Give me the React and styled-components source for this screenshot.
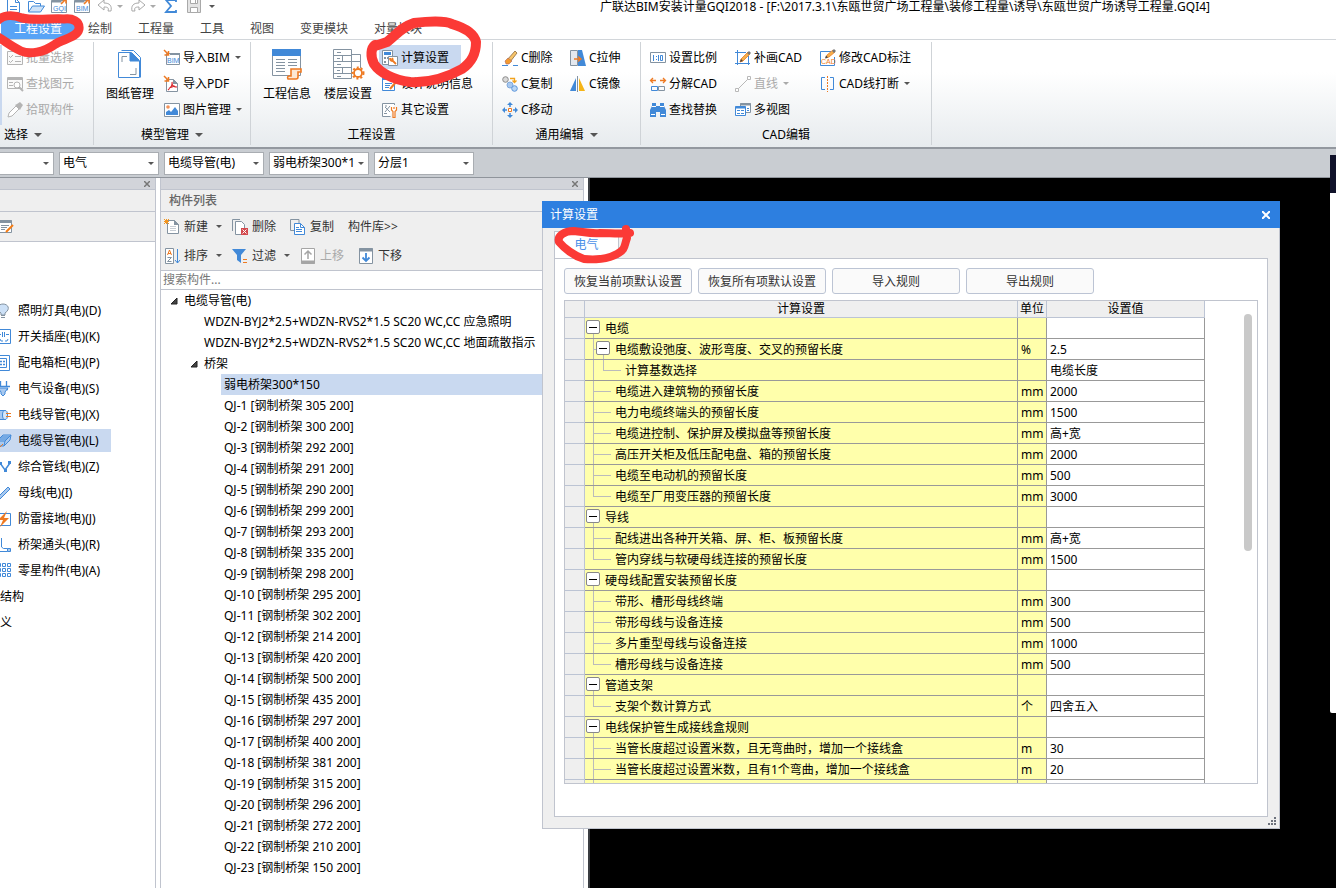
import React from "react";
import styled, { createGlobalStyle, css } from "styled-components";

const BLUE = "#4189d8";
const STEEL = "#8493a1";
const ORANGE = "#ee7a22";
const LINE = "#c0c4ce";

const GlobalStyle = createGlobalStyle`
  * {
    box-sizing: border-box;
  }
  body {
    margin: 0;
    background: #fff;
  }
  body, button, input, select {
    font-family: "Noto Sans", "Noto Sans CJK SC", sans-serif;
    font-size: 12px;
    line-height: 20px;
    color: #000;
  }
  button {
    border: none;
    padding: 0;
    background: none;
    white-space: nowrap;
    cursor: pointer;
  }
`;

/* ---------- icons ---------- */

const Icon = styled.svg`
  width: ${(p) => p.$size || 16}px;
  height: ${(p) => p.$size || 16}px;
  flex: none;
  display: block;
  fill: none;
  overflow: visible;
`;

const IconText = styled.text`
  font-size: 7px;
  font-family: "Liberation Sans", sans-serif;
`;

const PageShape = ({ x = 2 }) => (
  <path d={`M${x + 0.5} 1.5h7l4 4v9h-11z M${x + 7.5} 1.5v4h4`} stroke={STEEL} fill="#fff" />
);

const pencil = (
  <g>
    <path d="M5 12l1-3 7-7 2 2-7 7z" fill="#f5b04c" stroke={ORANGE} strokeWidth=".8" />
    <path d="M12 3l2-2 2 2-2 2z" fill="#777" />
    <path d="M5 12l1-3 2 2z" fill="#444" />
  </g>
);

const icons = {
  newFile: (
    <g stroke={BLUE}>
      <path d="M2.5.5h8l4 4v10h-12z" fill="#fff" />
      <path d="M10.5.5v4h4" />
      <path d="M5 8.5h7M5 11.5h7" />
    </g>
  ),
  open: (
    <g stroke={BLUE}>
      <path d="M.5 14V3.5h5l2 2h5v3" fill="#fff" />
      <path d="M.5 14l4-6h12l-4 6z" fill="#cfe3f8" />
    </g>
  ),
  gqi: (
    <g>
      <path d="M.5 2.5h15v12H.5z" stroke={STEEL} fill="#fff" />
      <path d="M.5 3.5h10" stroke={STEEL} strokeWidth="2" />
      <IconText x="2" y="13" fill={BLUE}>GQI</IconText>
      <path d="M10 6l4-4M11 1.5h4v4" stroke={ORANGE} strokeWidth="1.6" />
    </g>
  ),
  bimOut: (
    <g>
      <path d="M.5 2.5h15v12H.5z" stroke={STEEL} fill="#fff" />
      <path d="M.5 3.5h10" stroke={STEEL} strokeWidth="2" />
      <IconText x="2" y="13" fill={BLUE}>BIM</IconText>
      <path d="M10 6l4-4M11 1.5h4v4" stroke={ORANGE} strokeWidth="1.6" />
    </g>
  ),
  undo: <path d="M1 7l6-5v3c6 0 8 3 7 8h-3c1-3 0-4-4-4v3z" stroke="#a9a9a9" fill="#fff" />,
  redo: <path d="M15 7L9 2v3C3 5 1 8 2 13h3c-1-3 0-4 4-4v3z" stroke="#a9a9a9" fill="#fff" />,
  sum: <path d="M13 4V2H3l5 6-5 6h10v-2" stroke={BLUE} strokeWidth="1.8" />,
  save: (
    <g stroke="#a9a9a9">
      <path d="M1.5 1.5h13v13h-13z" fill="#e4e4e4" />
      <path d="M4.5 1.5h7v4h-7zM4.5 9.5h7v5h-7z" fill="#fff" />
      <path d="M9.5 2v3" />
    </g>
  ),
  batch: (
    <g stroke="#b4b4b4">
      <path d="M.5 1.5h15v13H.5z" fill="#fafafa" />
      <path d="M2 6l1.5 1.5L6 5M2 11l1.5 1.5L6 10M8 6.5h6M8 11.5h6" />
    </g>
  ),
  find: (
    <g stroke="#b4b4b4">
      <path d="M.5 1.5h15v11H.5z" fill="#fafafa" />
      <path d="M1 3h14" strokeWidth="2" />
      <path d="M2 6.5h4M2 9.5h4" />
      <circle cx="10" cy="9" r="3" fill="#fff" />
      <path d="M12 11l4 4" strokeWidth="2" />
    </g>
  ),
  dropper: (
    <g>
      <path d="M1 15l1-4 7-7 3 3-7 7z" stroke="#b4b4b4" fill="#fff" />
      <path d="M8 3l2-1 3-2 3 3-2 3-1 2z" fill="#b4b4b4" />
    </g>
  ),
  importBim: (
    <g>
      <path d="M2.5 3.5h13v11h-13z" stroke={STEEL} fill="#fff" />
      <path d="M6 4h10" stroke={STEEL} strokeWidth="2" />
      <IconText x="3" y="13" fill={BLUE}>BIM</IconText>
      <path d="M0 0l4 4M4.5 1v4h-4" stroke={ORANGE} strokeWidth="1.5" />
    </g>
  ),
  importPdf: (
    <g>
      <path d="M2.5 3.5h7l4 4v8h-11z" stroke={STEEL} fill="#fff" />
      <path d="M9 3l5 5H9z" fill={STEEL} />
      <path d="M8 6c1 4-2 6-4 8 M8 8c1 3 3 3 5 3 M5 12l6-2" stroke="#d8262c" strokeWidth="1.2" />
      <path d="M0 0l4 4M4.5 1v4h-4" stroke={ORANGE} strokeWidth="1.5" />
    </g>
  ),
  picture: (
    <g>
      <path d="M.5 1.5h15v13H.5z" stroke={STEEL} fill="#fff" />
      <circle cx="4" cy="5" r="1.8" fill="#f3935a" />
      <path d="M2 13v-3l3-2 2 2 4-5 3 4v4z" fill={BLUE} />
    </g>
  ),
  calc: (
    <g>
      <path d="M.5.5h10v14H.5z" stroke={STEEL} fill="#fff" />
      <path d="M2 2h7v3H2z" fill={BLUE} />
      <path d="M2 7h2v2H2zM5 7h2v2H5zM2 11h2v2H2z" fill={STEEL} />
      <path d="M6.5 6.5h9v9h-9z" stroke={STEEL} fill="#fff" />
      <path d="M8 8c0 3 2 3 3 3l3 3M10 8l1 2" stroke={ORANGE} strokeWidth="1.8" />
    </g>
  ),
  describe: (
    <g>
      <path d="M.5 1.5h12v13H.5z" stroke={BLUE} fill="#fff" />
      <path d="M.5 2.5h12" stroke={BLUE} strokeWidth="3" />
      <path d="M3 7.5h7M3 9.5h5M3 11.5h4" stroke={BLUE} />
      <path d="M8 13l6-7" stroke={ORANGE} strokeWidth="2" />
    </g>
  ),
  other: (
    <g>
      <path d="M12.5 3V1.500H.5v13h8" stroke={STEEL} fill="#fff" />
      <path d="M3 5l5 5M8 4l-5 6M3 4h2M2 11.5h3" stroke={STEEL} />
      <path d="M9.500 5v3l1.500 1.500V15.500h2V9.500L14.500 8V5M12 5v2" stroke={ORANGE} strokeWidth="1.2" fill="#fff" />
    </g>
  ),
  eraser: (
    <g>
      <path d="M0 15.5h6M11 15.5h5" stroke={BLUE} />
      <path d="M5 10l8-9 2 2-7 9z" fill="#f7c46a" stroke="#8a6a3c" strokeWidth=".8" />
      <path d="M3 11l3-3 4 3-3 3H4z" fill="#f39a2e" stroke="#a66" strokeWidth=".6" />
    </g>
  ),
  copyC: (
    <g>
      <circle cx="3.5" cy="3.5" r="2.8" stroke="#8c8c8c" fill="#d9d9d9" />
      <path d="M8 2.5h4.500V6M10.5 4.5l2 2 2-2" stroke="#f2a21c" strokeWidth="1.3" />
      <circle cx="8" cy="9" r="3" stroke="#7fa9dc" fill="#a9c9ef" />
      <circle cx="12.5" cy="12.5" r="2.8" stroke="#5d96da" fill="#b9d6f5" />
    </g>
  ),
  move: (
    <g>
      <path d="M8 0l3 3H5zM8 16l3-3H5zM0 8l3-3v6zM16 8l-3-3v6z" fill={BLUE} />
      <path d="M8 3v2M8 11v2M3 8h2M11 8h2" stroke={BLUE} strokeWidth="1.5" />
      <path d="M6.5 6.5h3v3h-3z" stroke={ORANGE} fill="#fff" />
    </g>
  ),
  stretch: (
    <g>
      <path d="M.5.5h7v15h-7z" stroke={STEEL} fill="#e4e8ee" />
      <path d="M8 0h4l4 16H8z" fill={BLUE} />
      <path d="M4 9h7M8 6.5l3 2.500-3 2.500" stroke={ORANGE} strokeWidth="1.4" />
    </g>
  ),
  mirror: (
    <g>
      <path d="M6 2v13H0z" fill={BLUE} />
      <path d="M9 2v13h6z" fill="#f5b417" />
      <path d="M7.5 0v16" stroke={STEEL} />
    </g>
  ),
  scale: (
    <g>
      <path d="M.5 2.5h15v10H.5z" stroke={STEEL} fill="#fff" />
      <path d="M3.500 5v6M6.500 6v1M6.500 9v1M8.500 5v6M10.500 5.5h2v5h-2z" stroke={BLUE} />
    </g>
  ),
  explode: (
    <g>
      <path d="M1 4.5h5M10 4.5h5M3 2L.5 4.5 3 7M13 2l2.5 2.5L13 7" stroke={ORANGE} strokeWidth="1.3" />
      <path d="M1.5 10.5h6v4h-6z" stroke={BLUE} />
      <path d="M8.5 10.5h6v4h-6z" stroke={STEEL} />
    </g>
  ),
  replace: (
    <g fill={BLUE}>
      <path d="M2 1h4v3h4V1h4v3l2 4v7h-6v-5H6v5H0V8l2-4z" />
      <path d="M2 4.5h4M10 4.5h4M1 12.5h4M11 12.5h4" stroke="#fff" />
    </g>
  ),
  drawCad: (
    <g>
      <path d="M2.5 0v15M0 2.5h11M0 13.5h15M13.5 6v9" stroke={BLUE} />
      {pencil}
    </g>
  ),
  lineTool: (
    <g stroke="#b8b8b8">
      <path d="M2 14L14 2" />
      <path d="M.5 12.5h3v3h-3zM12.5.5h3v3h-3z" fill="#fff" />
    </g>
  ),
  multi: (
    <g>
      <path d="M5.5 1.5h10v9h-10z" stroke={STEEL} fill="#fff" />
      <path d="M5 2.5h11" stroke={STEEL} strokeWidth="2" />
      <path d="M.5 4.5h10v9H.5z" stroke={BLUE} fill="#fff" />
      <path d="M.5 5.5h10" stroke={BLUE} strokeWidth="2" />
      <path d="M2 8.5h3M6 8.5h3M2 11.5h3M6 11.5h3M12 6.5h2M12 8.5h2" stroke={BLUE} />
    </g>
  ),
  editCad: (
    <g>
      <path d="M11 1.5H.5v14h14V7" stroke={BLUE} fill="#fff" />
      <path d="M6 8l1-3 6-5 2 2-6 5z" fill="#f5b04c" stroke={ORANGE} strokeWidth=".8" />
      <path d="M12 1l2-2 2 2-2 2z" fill="#777" />
      <path d="M5 8.500l1-3 2 2z" fill="#444" />
      <IconText x="1" y="14" fill={ORANGE}>CAD</IconText>
    </g>
  ),
  breakCad: (
    <g>
      <path d="M5 1.5H1.5v12H5M10 1.5h3.500v12H10" stroke={BLUE} />
      <path d="M7.5 0v16" stroke={ORANGE} strokeDasharray="2 1" />
    </g>
  ),
  bulb: (
    <g>
      <path d="M6 10C0 6 3 1 8 1s8 5 2 9v2H6z" stroke={STEEL} fill="#cde1f7" />
      <path d="M6 14.5h4M6 12.5h4" stroke={STEEL} />
    </g>
  ),
  socket: (
    <g stroke={BLUE}>
      <path d="M.5.5h15v14H.5z" fill="#fff" />
      <path d="M3 5.5h3M7.5 3v5M9.5 3v5M11 5.5h3M5 10l1 2h2M13 10l-1 2h-2" />
    </g>
  ),
  cabinet: (
    <g stroke={BLUE}>
      <path d="M.5.5h14v15H.5z" fill="#fff" />
      <path d="M3.5 3.5h8v9h-8z" />
      <path d="M5 6.5h2M8 6.5h2M5 9.5h2M8 9.5h2" strokeWidth="1.4" />
    </g>
  ),
  device: (
    <g>
      <path d="M5.5 0v5M11.5 0v5M1 5.5h14M3 8.5h10" stroke={BLUE} strokeWidth="1.3" />
      <path d="M3 7h10l-3 4v2l-2 2-2-2v-2z" fill="#a9c9ef" stroke={BLUE} />
    </g>
  ),
  conduit: (
    <g>
      <path d="M1 3.5h9v9H1z" fill="#a9c9ef" stroke={BLUE} />
      <ellipse cx="10" cy="8" rx="2.5" ry="4.5" fill="#d7e7f8" stroke={BLUE} />
      <path d="M11 6.5h5M11 9.5h5" stroke={ORANGE} />
    </g>
  ),
  tray: (
    <g>
      <path d="M2 8l6-6h8l-1 5-6 6H1z" fill="#a9c9ef" stroke={BLUE} />
      <path d="M2 8h8l6-6M10 8l-1 5M4 6h8M6 4h8" stroke={BLUE} />
      <path d="M5 14l3-3" stroke={ORANGE} />
    </g>
  ),
  pipes: (
    <g stroke={BLUE}>
      <path d="M1 10l4-6 5 7 5-7" strokeWidth="1.5" />
      <path d="M9 10h3v3H9zM13 2h3v3h-3zM4 3h3v3H4z" fill={BLUE} stroke="none" />
    </g>
  ),
  bus: <path d="M2 13L13 2l2 2L4 15z" fill="#a9c9ef" stroke={BLUE} />,
  ground: (
    <g>
      <path d="M.5 2.5h15v12H.5z" stroke={BLUE} fill="#fff" />
      <path d="M12 0L3 9h5l-3 7 9-9H9z" fill={ORANGE} />
    </g>
  ),
  joint: (
    <g stroke={BLUE}>
      <path d="M2.5 1v13.500h10M6.500 1v9l2 1.500h4" />
      <path d="M12.500 11.500h3v3h-3z" fill="#a9c9ef" />
    </g>
  ),
  misc: (
    <g stroke={BLUE}>
      {[2.5, 7.5, 12.5].map((x) =>
        [0.5, 5.5, 10.5].map((y) => <path key={x + "-" + y} d={`M${x} ${y}h3v3h-3z`} />)
      )}
    </g>
  ),
  noteEdit: (
    <g>
      <path d="M.5 1.5h13v12H.5z" stroke={STEEL} fill="#fff" />
      <path d="M.5 2.5h13" stroke={STEEL} strokeWidth="3" />
      <path d="M3 6.5h8M3 8.5h6M3 10.5h4" stroke={STEEL} />
      <path d="M8 13l7-7" stroke="#f57c14" strokeWidth="2" />
    </g>
  ),
  create: (
    <g>
      <PageShape x={3} />
      <path d="M10 1l5 5h-5z" fill={STEEL} />
      <path d="M6 7.5h6M6 9.5h6M6 11.5h6" stroke="#c6ccd4" />
      <path d="M0 0l5 5M5 0L0 5M2.5 0v5M0 2.5h5" stroke="#f2941d" />
    </g>
  ),
  remove: (
    <g>
      <path d="M.5 12V.5H8" stroke={STEEL} />
      <path d="M3.5 2.5h6l3 3v10h-9z" stroke={STEEL} fill="#fff" />
      <path d="M9 9h7v7H9z" fill="#d34a4e" />
      <path d="M10.5 10.5l4 4M14.5 10.5l-4 4" stroke="#fff" />
    </g>
  ),
  copy: (
    <g>
      <path d="M4 11.5H.5V.5H9V4" stroke={STEEL} />
      <path d="M4.5 4.5h6l4 4v7h-10z" stroke={BLUE} fill="#fff" />
      <path d="M10.5 4.5v4h4M6 8.5h3M6 10.5h6M6 12.5h6" stroke={BLUE} />
    </g>
  ),
  sort: (
    <g>
      <path d="M1.5.5h8v15h-8z" stroke={STEEL} fill="#fff" />
      <path d="M3.5 7l2-5 2 5M4 5.5h3" stroke={ORANGE} />
      <path d="M3.5 9.5h4l-4 4h4" stroke={STEEL} />
      <path d="M13.5 1v14M11 12l2.500 3 2.500-3" stroke={BLUE} />
    </g>
  ),
  filter: (
    <g>
      <path d="M0 1h14L9 7v8l-4-3V7z" fill={BLUE} />
      <path d="M11 11.5h4M11 14.5h4" stroke={ORANGE} />
    </g>
  ),
  up: (
    <g>
      <path d="M1.5.5h13v15h-13z" stroke="#a5a5a5" fill="#fff" />
      <path d="M1 14h14" stroke="#a5a5a5" strokeWidth="3" />
      <path d="M8 11V3M4.5 6.5L8 3l3.500 3.500" stroke="#a5a5a5" strokeWidth="1.5" />
    </g>
  ),
  down: (
    <g>
      <path d="M1.5.5h13v15h-13z" stroke={STEEL} fill="#fff" />
      <path d="M1 2h14" stroke={STEEL} strokeWidth="3" />
      <path d="M8 5v8M4.5 9.5L8 13l3.500-3.500" stroke={BLUE} strokeWidth="1.8" />
    </g>
  ),
};

const bigIcons = {
  drawing: (
    <g stroke={BLUE}>
      <path d="M7.5 2.5h12l7 7v20" />
      <path d="M4.5 4.5h13l8 8v17h-21z" fill="#fff" />
      <path d="M16 4v9h9z" fill={BLUE} />
      <path d="M8 14V8.5h5M22 20v6.500h-6" stroke={STEEL} />
    </g>
  ),
  info: (
    <g>
      <path d="M1.5 1.5h28v26h-28z" stroke={STEEL} fill="#fff" />
      <path d="M1 1h29v7H1z" fill={BLUE} />
      <path d="M5 11.5h9M17 11.5h9M5 14.5h9M17 14.5h9M5 17.5h9M17 17.5h9M5 20.5h9M5 23.5h9" stroke={STEEL} />
      <path d="M20 21h10v3h-3v5c0 2-1 2-2 2h-8c-1-2 0-3 1-3h2z" fill="#fde7d2" stroke={ORANGE} strokeWidth="1.6" />
    </g>
  ),
  floor: (
    <g>
      <path d="M1.5 1.5h18v29h-18zM19.5 6.5h9V20M1.5 7.5h18M1.5 13.5h27M1.5 19.5h18M1.5 25.5h18M10.5 7v7M10.5 19v6" stroke={STEEL} fill="none" />
      <path d="M5 4.5h4M5 10.5h3M5 16.5h4M5 22.5h3M5 28.5h4" stroke={STEEL} />
      <circle cx="26" cy="25" r="5.5" stroke={ORANGE} strokeWidth="2" strokeDasharray="2 2" />
      <circle cx="26" cy="25" r="4" stroke={ORANGE} strokeWidth="1.8" fill="#fff" />
    </g>
  ),
};

const Glyph = ({ name }) => (
  <Icon viewBox="0 0 16 16" aria-hidden="true">
    {icons[name]}
  </Icon>
);

const Caret = styled.span`
  flex: none;
  width: 0;
  height: 0;
  border: ${(p) => (p.$wide ? 4 : 3)}px solid transparent;
  border-top-color: ${(p) => (p.$dim ? "#aaa" : "#555")};
  border-bottom: none;
`;

/* ---------- title bar and menu ---------- */

const Page = styled.div`
  position: relative;
  display: flex;
  flex-direction: column;
  height: 100vh;
  overflow: hidden;
`;

const TitleBar = styled.header`
  display: flex;
  align-items: center;
  height: 14px;
  flex: none;
  line-height: 14px;
  white-space: nowrap;
`;

const QuickAccess = styled.div`
  display: flex;
  align-items: center;
  gap: 7px;
  width: 600px;
  height: 14px;
  padding: 0 0 2px 5px;
  flex: none;
`;

const QuickButton = styled.button`
  display: flex;
  align-items: center;
  gap: 4px;
`;

const MenuTabs = styled.nav`
  display: flex;
  align-items: flex-end;
  height: 26px;
  flex: none;
  padding-left: 1px;
  border-bottom: 1px solid #d2d6da;
`;

const MenuTab = styled.button`
  height: 21px;
  padding: 1px 13px 0;
  color: #444;
  ${(p) =>
    p.$active &&
    css`
      color: #fff;
      background: #58a3f6;
    `}
`;

/* ---------- ribbon ---------- */

const Ribbon = styled.div`
  display: flex;
  height: 109px;
  flex: none;
  background: linear-gradient(#fff 30%, #e7ebee);
  border-bottom: 2px solid #93989f;
`;

const Group = styled.section`
  display: flex;
  flex-direction: column;
  flex: none;
  width: ${(p) => p.$width}px;
  margin: 2px 0;
  border-right: 1px solid #cfd3d7;
`;

const GroupBody = styled.div`
  display: flex;
  height: 83px;
  flex: none;
  padding: 3px 0 0 ${(p) => p.$pad}px;
`;

const GroupLabel = styled.div`
  display: flex;
  align-items: center;
  justify-content: ${(p) => (p.$left ? "flex-start" : "center")};
  gap: 6px;
  height: 20px;
  padding-left: ${(p) => (p.$left ? 4 : 0)}px;
`;

const Column = styled.div`
  display: flex;
  flex-direction: column;
  align-items: flex-start;
  gap: 2px;
  min-width: ${(p) => p.$width || 0}px;
  ${(p) => p.$marked && "margin-left: -4px; padding-left: 2px; border-left: 2px solid #c9d8ef;"}
`;

const RibbonButton = styled.button`
  display: flex;
  align-items: center;
  gap: 3px;
  height: 24px;
  padding: 1px ${(p) => (p.$active ? 12 : 3)}px 0 3px;
  background: ${(p) => (p.$active ? "#c9d9f0" : "none")};
  color: ${(p) => (p.$dim ? "#aaa" : "#000")};

  ${Caret} {
    margin-left: 2px;
  }
`;

const BigButton = styled.button`
  display: flex;
  flex-direction: column;
  align-items: center;
  gap: 4px;
  height: 60px;
  margin: 3px 7px 0 ${(p) => (p.$next ? 6 : 0)}px;
`;

const groups = [
  {
    label: "选择",
    width: 94,
    pad: 4,
    left: true,
    caret: true,
    cols: [
      {
        marked: true,
        items: [
          { icon: "batch", text: "批量选择", dim: true },
          { icon: "find", text: "查找图元", dim: true },
          { icon: "dropper", text: "拾取构件", dim: true },
        ],
      },
    ],
  },
  {
    label: "模型管理",
    width: 157,
    pad: 12,
    caret: true,
    big: [{ icon: "drawing", text: "图纸管理" }],
    cols: [
      {
        items: [
          { icon: "importBim", text: "导入BIM", caret: true },
          { icon: "importPdf", text: "导入PDF" },
          { icon: "picture", text: "图片管理", caret: true },
        ],
      },
    ],
  },
  {
    label: "工程设置",
    width: 242,
    pad: 12,
    big: [
      { icon: "info", text: "工程信息" },
      { icon: "floor", text: "楼层设置" },
    ],
    cols: [
      {
        items: [
          { icon: "calc", text: "计算设置", active: true },
          { icon: "describe", text: "设计说明信息" },
          { icon: "other", text: "其它设置" },
        ],
      },
    ],
  },
  {
    label: "通用编辑",
    width: 148,
    pad: 6,
    caret: true,
    cols: [
      {
        width: 68,
        items: [
          { icon: "eraser", text: "C删除" },
          { icon: "copyC", text: "C复制" },
          { icon: "move", text: "C移动" },
        ],
      },
      {
        items: [
          { icon: "stretch", text: "C拉伸" },
          { icon: "mirror", text: "C镜像" },
        ],
      },
    ],
  },
  {
    label: "CAD编辑",
    width: 291,
    pad: 6,
    cols: [
      {
        width: 85,
        items: [
          { icon: "scale", text: "设置比例" },
          { icon: "explode", text: "分解CAD" },
          { icon: "replace", text: "查找替换" },
        ],
      },
      {
        width: 85,
        items: [
          { icon: "drawCad", text: "补画CAD" },
          { icon: "lineTool", text: "直线", dim: true, caret: true },
          { icon: "multi", text: "多视图" },
        ],
      },
      {
        items: [
          { icon: "editCad", text: "修改CAD标注" },
          { icon: "breakCad", text: "CAD线打断", caret: true },
        ],
      },
    ],
  },
];

/* ---------- selector bar ---------- */

const SelectorBar = styled.div`
  display: flex;
  align-items: center;
  gap: 5px;
  height: 29px;
  flex: none;
  margin-left: -46px;
  background: #c9cdd2;
  border-bottom: 1px solid #8f949b;
`;

const SelectWrap = styled.label`
  position: relative;
  width: 100px;
  height: 23px;

  ${Caret} {
    position: absolute;
    right: 5px;
    top: 10px;
    pointer-events: none;
  }
`;

const Select = styled.select`
  appearance: none;
  width: 100%;
  height: 100%;
  padding: 0 14px 0 3px;
  border: 1px solid #a9adb2;
  border-radius: 0;
  background: #fff;
  overflow: hidden;
  text-overflow: clip;
`;

/* ---------- docked panels ---------- */

const Workspace = styled.main`
  display: flex;
  flex: 1;
  min-height: 0;
  background: #fff;
`;

const Panel = styled.aside`
  display: flex;
  flex-direction: column;
  flex: none;
  width: ${(p) => p.$width}px;
  margin-right: 4px;
  border-right: 1px solid ${LINE};
  border-left: ${(p) => (p.$framed ? `1px solid ${LINE}` : "none")};
`;

const PanelGrip = styled.div`
  display: flex;
  align-items: center;
  justify-content: flex-end;
  height: 12px;
  flex: none;
  padding-right: 5px;
  background: #d2d4da;
  border-bottom: 1px solid ${LINE};
`;

const CloseButton = styled.button`
  display: flex;

  svg {
    width: ${(p) => p.$size}px;
    height: ${(p) => p.$size}px;
    stroke: ${(p) => p.$color};
    stroke-width: 2;
  }
`;

const PanelTitle = styled.div`
  height: 22px;
  flex: none;
  padding: 1px 0 0 8px;
  background: #efefef;
  border-bottom: 1px solid ${LINE};
  color: #666;
  font-weight: 500;
`;

const PanelTools = styled.div`
  flex: none;
  background: #efefef;
  border-bottom: 1px solid ${LINE};
`;

const ToolRow = styled.div`
  display: flex;
  align-items: center;
  height: 29px;
  padding-left: 3px;
`;

const ToolButton = styled.button`
  display: flex;
  align-items: center;
  gap: 4px;
  margin-right: ${(p) => (p.$caret ? 10 : 14)}px;
  color: ${(p) => (p.$dim ? "#aaa" : "#333")};

  ${Caret} {
    margin-left: 4px;
  }
`;

const SideTools = styled(ToolRow)`
  margin-left: -5px;
`;

const NavList = styled.nav`
  display: flex;
  flex-direction: column;
  align-items: flex-start;
  gap: 3px;
  padding-top: 57px;
  margin-left: -5px;
`;

const NavItem = styled.button`
  display: flex;
  align-items: center;
  gap: 7px;
  height: 23px;
  width: 116px;
  padding-left: ${(p) => p.$indent || 0}px;
  background: ${(p) => (p.$active ? "#c9d9f0" : "none")};
`;

const navItems = [
  ["bulb", "照明灯具(电)(D)"],
  ["socket", "开关插座(电)(K)"],
  ["cabinet", "配电箱柜(电)(P)"],
  ["device", "电气设备(电)(S)"],
  ["conduit", "电线导管(电)(X)"],
  ["tray", "电缆导管(电)(L)"],
  ["pipes", "综合管线(电)(Z)"],
  ["bus", "母线(电)(I)"],
  ["ground", "防雷接地(电)(J)"],
  ["joint", "桥架通头(电)(R)"],
  ["misc", "零星构件(电)(A)"],
];

const SearchInput = styled.input`
  height: 19px;
  flex: none;
  padding: 0 2px;
  border: none;
  border-bottom: 1px solid ${LINE};
  outline: none;

  &::placeholder {
    color: #777;
    opacity: 1;
  }
`;

const Tree = styled.ul`
  margin: 0;
  padding: 0;
  list-style: none;
  overflow: hidden;
`;

const TreeRow = styled.li`
  display: flex;
  align-items: center;
  gap: 6px;
  height: 21px;
  margin-left: ${(p) => p.$indent}px;
  padding-left: 3px;
  white-space: nowrap;
  background: ${(p) => (p.$active ? "#c9d9f0" : "none")};
`;

const Expander = styled.svg`
  width: 8px;
  height: 8px;
  flex: none;
`;

const trayRows = [
  "305", "300", "292", "291", "290", "299", "293", "335", "298", "295", "302", "214",
  "420", "500", "435", "297", "400", "381", "315", "296", "272", "210", "150",
];

const Canvas = styled.div`
  flex: 1;
  background: #000;
  border-left: 2px solid #3a3d42;
`;

// collapsed tool window docked on the right edge of the screen
const EdgeDock = styled.div`
  position: absolute;
  right: 0;
  top: 155px;
  width: 6px;
  height: 558px;
  border-radius: 0 0 0 2px;
  background: #fff;
  border-top: 38px solid #10122a;
`;

/* ---------- settings dialog ---------- */

const Dialog = styled.section`
  position: absolute;
  left: 542px;
  top: 201px;
  width: 738px;
  background: #efefef;
`;

const DialogTitle = styled.div`
  display: flex;
  align-items: center;
  justify-content: space-between;
  height: 27px;
  padding: 0 10px 0 8px;
  background: #2d7fe0;
  color: #fff;
`;

const DialogBody = styled.div`
  position: relative;
  padding: 3px 11px 11px;
  border: 1px solid ${LINE};
  border-top: none;
`;

const DialogTab = styled.button`
  display: block;
  width: 65px;
  height: 27px;
  border: 1px solid ${LINE};
  border-bottom: none;
  background: #fff;
  color: #4a8fe8;
`;

const DialogPanel = styled.div`
  padding: 9px 9px 32px;
  border: 1px solid ${LINE};
  background: #fff;
`;

const ButtonRow = styled.div`
  display: flex;
  gap: 6px;
  margin-bottom: 6px;
`;

const RuleButton = styled.button`
  width: 128px;
  height: 26px;
  padding-top: 1px;
  border: 1px solid #bcc4d4;
  border-radius: 3px;
  background: #fafafa;
  color: #333;
`;

const TableFrame = styled.div`
  display: flex;
  height: 484px;
  overflow: hidden;
  border: 1px solid ${LINE};
`;

const Table = styled.table`
  table-layout: fixed;
  width: 640px;
  flex: none;
  align-self: flex-start;
  border-spacing: 0;
`;

const Th = styled.th`
  height: 17px;
  padding: 0;
  line-height: 16px;
  font-weight: 400;
  background: #efefef;
  border-right: 1px solid #bcc4d4;
  border-bottom: 1px solid #bcc4d4;
  width: ${(p) => p.$width}px;
`;

const Td = styled.td`
  height: 21px;
  padding: ${(p) => (p.$text ? "2px 0 0 3px" : 0)};
  line-height: 18px;
  white-space: nowrap;
  background: ${(p) => (p.$yellow ? "#ffffab" : "#fff")};
  border-right: 1px solid #999;
  border-bottom: 1px solid #999;
`;

const RowHead = styled(Td)`
  background: #efefef;
  border-color: #bcc4d4;
`;

const NameCell = styled.div`
  display: flex;
  height: 20px;
  padding-left: ${(p) => (p.$top ? 1 : 8)}px;
`;

const NameText = styled.span`
  padding-top: 2px;
`;

// vertical connector plus an optional horizontal arm
const Guide = styled.span`
  flex: none;
  width: ${(p) => p.$width}px;
  height: 20px;
  background:
    linear-gradient(#bbb, #bbb) 0 0 / 1px ${(p) => (p.$last ? "11px" : "100%")} no-repeat,
    linear-gradient(#bbb, #bbb) 0 10px / ${(p) => p.$arm}px 1px no-repeat;
`;

const ToggleSlot = styled.span`
  flex: none;
  width: 14px;
  height: 20px;
  padding-top: 2px;
  margin-right: 5px;
  background: linear-gradient(#bbb, #bbb) 7px 15px / 1px 5px no-repeat;
`;

const Toggle = styled.button`
  display: flex;
  align-items: center;
  justify-content: center;
  width: 14px;
  height: 14px;
  border: 1px solid #888;
  border-radius: 2px;
  background: #fff;

  &::before {
    content: "";
    width: 8px;
    height: 1px;
    background: #000;
  }
`;

const ScrollTrack = styled.div`
  width: 8px;
  margin: 13px 5px 0 auto;
`;

const ScrollThumb = styled.div`
  height: 237px;
  border-radius: 4px;
  background: #c9c9c9;
`;

const Grip = styled.svg`
  position: absolute;
  right: 2px;
  bottom: 2px;
  width: 10px;
  height: 10px;
  fill: #6d727c;
`;

const settings = [
  { level: 0, name: "电缆" },
  { level: 1, name: "电缆敷设弛度、波形弯度、交叉的预留长度", unit: "%", value: "2.5", open: true },
  { level: 2, name: "计算基数选择", value: "电缆长度", last: true },
  { level: 1, name: "电缆进入建筑物的预留长度", unit: "mm", value: "2000" },
  { level: 1, name: "电力电缆终端头的预留长度", unit: "mm", value: "1500" },
  { level: 1, name: "电缆进控制、保护屏及模拟盘等预留长度", unit: "mm", value: "高+宽" },
  { level: 1, name: "高压开关柜及低压配电盘、箱的预留长度", unit: "mm", value: "2000" },
  { level: 1, name: "电缆至电动机的预留长度", unit: "mm", value: "500" },
  { level: 1, name: "电缆至厂用变压器的预留长度", unit: "mm", value: "3000", last: true },
  { level: 0, name: "导线" },
  { level: 1, name: "配线进出各种开关箱、屏、柜、板预留长度", unit: "mm", value: "高+宽" },
  { level: 1, name: "管内穿线与软硬母线连接的预留长度", unit: "mm", value: "1500", last: true },
  { level: 0, name: "硬母线配置安装预留长度" },
  { level: 1, name: "带形、槽形母线终端", unit: "mm", value: "300" },
  { level: 1, name: "带形母线与设备连接", unit: "mm", value: "500" },
  { level: 1, name: "多片重型母线与设备连接", unit: "mm", value: "1000" },
  { level: 1, name: "槽形母线与设备连接", unit: "mm", value: "500", last: true },
  { level: 0, name: "管道支架" },
  { level: 1, name: "支架个数计算方式", unit: "个", value: "四舍五入", last: true },
  { level: 0, name: "电线保护管生成接线盒规则" },
  { level: 1, name: "当管长度超过设置米数，且无弯曲时，增加一个接线盒", unit: "m", value: "30" },
  { level: 1, name: "当管长度超过设置米数，且有1个弯曲，增加一个接线盒", unit: "m", value: "20" },
  { level: 1, name: "" },
];

const Markup = styled.svg`
  position: absolute;
  left: 0;
  top: 0;
  width: 640px;
  height: 270px;
  pointer-events: none;
  fill: none;
  stroke: #fb3a36;
  stroke-linecap: round;
  stroke-linejoin: round;
`;

const Close = ({ size, color }) => (
  <CloseButton $size={size} $color={color} aria-label="关闭">
    <svg viewBox="0 0 8 8" aria-hidden="true">
      <path d="M0 0l8 8M8 0L0 8" />
    </svg>
  </CloseButton>
);

const Tool = ({ icon, text, caret, dim }) => (
  <ToolButton $caret={caret} $dim={dim}>
    {icon && <Glyph name={icon} />}
    {text}
    {caret && <Caret />}
  </ToolButton>
);

const Combo = ({ label, value }) => (
  <SelectWrap>
    <Select aria-label={label} defaultValue={value}>
      <option>{value}</option>
    </Select>
    <Caret />
  </SelectWrap>
);

const Expanded = () => (
  <Expander viewBox="0 0 8 8" aria-hidden="true">
    <path d="M7 1v6H1z" fill="#444" stroke="#222" />
  </Expander>
);

const SettingRow = ({ row }) => (
  <tr>
    <RowHead />
    <Td $yellow>
      <NameCell $top={row.level === 0}>
        {row.level === 1 && !row.open && <Guide $width={22} $arm={18} $last={row.last} />}
        {row.level === 2 && <Guide $width={10} $arm={0} />}
        {row.level === 2 && <Guide $width={22} $arm={18} $last={row.last} />}
        {row.open && <Guide $width={3} $arm={3} />}
        {(row.level === 0 || row.open) && (
          <ToggleSlot>
            <Toggle aria-label="折叠" />
          </ToggleSlot>
        )}
        <NameText>{row.name}</NameText>
      </NameCell>
    </Td>
    <Td $yellow $text>{row.unit}</Td>
    <Td $text>{row.value}</Td>
  </tr>
);

const App = () => {
  return (
    <Page>
      <GlobalStyle />
      <TitleBar>
        <QuickAccess>
          <QuickButton aria-label="新建"><Glyph name="newFile" /></QuickButton>
          <QuickButton aria-label="打开"><Glyph name="open" /></QuickButton>
          <QuickButton aria-label="导出GQI"><Glyph name="gqi" /></QuickButton>
          <QuickButton aria-label="导出BIM"><Glyph name="bimOut" /></QuickButton>
          <QuickButton aria-label="撤销"><Glyph name="undo" /><Caret $dim /></QuickButton>
          <QuickButton aria-label="恢复"><Glyph name="redo" /><Caret $dim /></QuickButton>
          <QuickButton aria-label="汇总"><Glyph name="sum" /></QuickButton>
          <QuickButton aria-label="保存"><Glyph name="save" /></QuickButton>
          <QuickButton aria-label="更多"><Caret /></QuickButton>
        </QuickAccess>
        <span>广联达BIM安装计量GQI2018 - [F:\2017.3.1\东瓯世贸广场工程量\装修工程量\诱导\东瓯世贸广场诱导工程量.GQI4]</span>
      </TitleBar>

      <MenuTabs>
        {["工程设置", "绘制", "工程量", "工具", "视图", "变更模块", "对量模块"].map((t, i) => (
          <MenuTab key={t} $active={i === 0}>{t}</MenuTab>
        ))}
      </MenuTabs>

      <Ribbon>
        {groups.map((g) => (
          <Group key={g.label} $width={g.width}>
            <GroupBody $pad={g.pad}>
              {(g.big || []).map((b, i) => (
                <BigButton key={b.text} $next={i > 0}>
                  <Icon $size={32} viewBox="0 0 32 32" aria-hidden="true">{bigIcons[b.icon]}</Icon>
                  {b.text}
                </BigButton>
              ))}
              {g.cols.map((c, i) => (
                <Column key={i} $width={c.width} $marked={c.marked}>
                  {c.items.map((it) => (
                    <RibbonButton key={it.text} $active={it.active} $dim={it.dim}>
                      <Glyph name={it.icon} />
                      {it.text}
                      {it.caret && <Caret $dim={it.dim} />}
                    </RibbonButton>
                  ))}
                </Column>
              ))}
            </GroupBody>
            <GroupLabel $left={g.left}>
              {g.label}
              {g.caret && <Caret $wide />}
            </GroupLabel>
          </Group>
        ))}
      </Ribbon>

      <SelectorBar>
        <Combo label="楼层" value="" />
        <Combo label="专业" value="电气" />
        <Combo label="构件类型" value="电缆导管(电)" />
        <Combo label="构件" value="弱电桥架300*150" />
        <Combo label="分层" value="分层1" />
      </SelectorBar>

      <Workspace>
        <Panel $width={156}>
          <PanelGrip><Close size={6} color="#777" /></PanelGrip>
          <PanelTitle />
          <PanelTools>
            <SideTools><Tool icon="noteEdit" /></SideTools>
          </PanelTools>
          <NavList>
            {navItems.map(([icon, text]) => (
              <NavItem key={icon} $active={icon === "tray"}>
                <Glyph name={icon} />
                {text}
              </NavItem>
            ))}
            <NavItem $indent={5}>结构</NavItem>
            <NavItem $indent={5}>义</NavItem>
          </NavList>
        </Panel>

        <Panel $width={424} $framed>
          <PanelGrip><Close size={6} color="#777" /></PanelGrip>
          <PanelTitle>构件列表</PanelTitle>
          <PanelTools>
            <ToolRow>
              <Tool icon="create" text="新建" caret />
              <Tool icon="remove" text="删除" />
              <Tool icon="copy" text="复制" />
              <Tool text="构件库>>" />
            </ToolRow>
            <ToolRow>
              <Tool icon="sort" text="排序" caret />
              <Tool icon="filter" text="过滤" caret />
              <Tool icon="up" text="上移" dim />
              <Tool icon="down" text="下移" />
            </ToolRow>
          </PanelTools>
          <SearchInput aria-label="搜索构件" placeholder="搜索构件..." />
          <Tree>
            <TreeRow $indent={6}><Expanded />电缆导管(电)</TreeRow>
            <TreeRow $indent={40}>WDZN-BYJ2*2.5+WDZN-RVS2*1.5 SC20 WC,CC 应急照明</TreeRow>
            <TreeRow $indent={40}>WDZN-BYJ2*2.5+WDZN-RVS2*1.5 SC20 WC,CC 地面疏散指示</TreeRow>
            <TreeRow $indent={26}><Expanded />桥架</TreeRow>
            <TreeRow $indent={60} $active>弱电桥架300*150</TreeRow>
            {trayRows.map((w, i) => (
              <TreeRow key={i} $indent={60}>{`QJ-${i + 1} [钢制桥架 ${w} 200]`}</TreeRow>
            ))}
          </Tree>
        </Panel>

        <Canvas />
      </Workspace>

      <EdgeDock />

      <Dialog role="dialog" aria-label="计算设置">
        <DialogTitle>
          计算设置
          <Close size={8} color="#fff" />
        </DialogTitle>
        <DialogBody>
          <DialogTab>电气</DialogTab>
          <DialogPanel>
            <ButtonRow>
              <RuleButton>恢复当前项默认设置</RuleButton>
              <RuleButton>恢复所有项默认设置</RuleButton>
              <RuleButton>导入规则</RuleButton>
              <RuleButton>导出规则</RuleButton>
            </ButtonRow>
            <TableFrame>
              <Table>
                <thead>
                  <tr>
                    <Th $width={20} />
                    <Th $width={433}>计算设置</Th>
                    <Th $width={29}>单位</Th>
                    <Th $width={158}>设置值</Th>
                  </tr>
                </thead>
                <tbody>
                  {settings.map((row, i) => (
                    <SettingRow key={i} row={row} />
                  ))}
                </tbody>
              </Table>
              <ScrollTrack><ScrollThumb /></ScrollTrack>
            </TableFrame>
          </DialogPanel>
          <Grip viewBox="0 0 10 10" aria-hidden="true">
            <path d="M7 1h2v2H7zM4 4h2v2H4zM7 4h2v2H7zM1 7h2v2H1zM4 7h2v2H4zM7 7h2v2H7z" />
          </Grip>
        </DialogBody>
      </Dialog>

      <Markup viewBox="0 0 640 270" aria-hidden="true">
        <path strokeWidth="9" d="M-4 22C2 15 12 14 22 18C35 21 52 18 64 19C72 18 80 21 79 29C77 38 62 39 54 45C44 52 30 55 21 51C10 46 4 40-4 36" />
        <path strokeWidth="10" d="M375 46L387 42C397 34 402 27 414 23C430 21 446 21 452 24C462 27 474 32 476 42C476 54 472 62 462 69C446 78 428 83 410 82C394 80 380 73 374 64C370 56 371 48 375 45" />
        <path strokeWidth="8" d="M626 229L627 238C624 246 626 249 617 254C608 259 594 260 584 259C574 256 564 248 559 242C557 236 564 231 574 231C584 232 592 234 600 233C610 233 620 234 630 233" />
      </Markup>
    </Page>
  );
};

export default App;
